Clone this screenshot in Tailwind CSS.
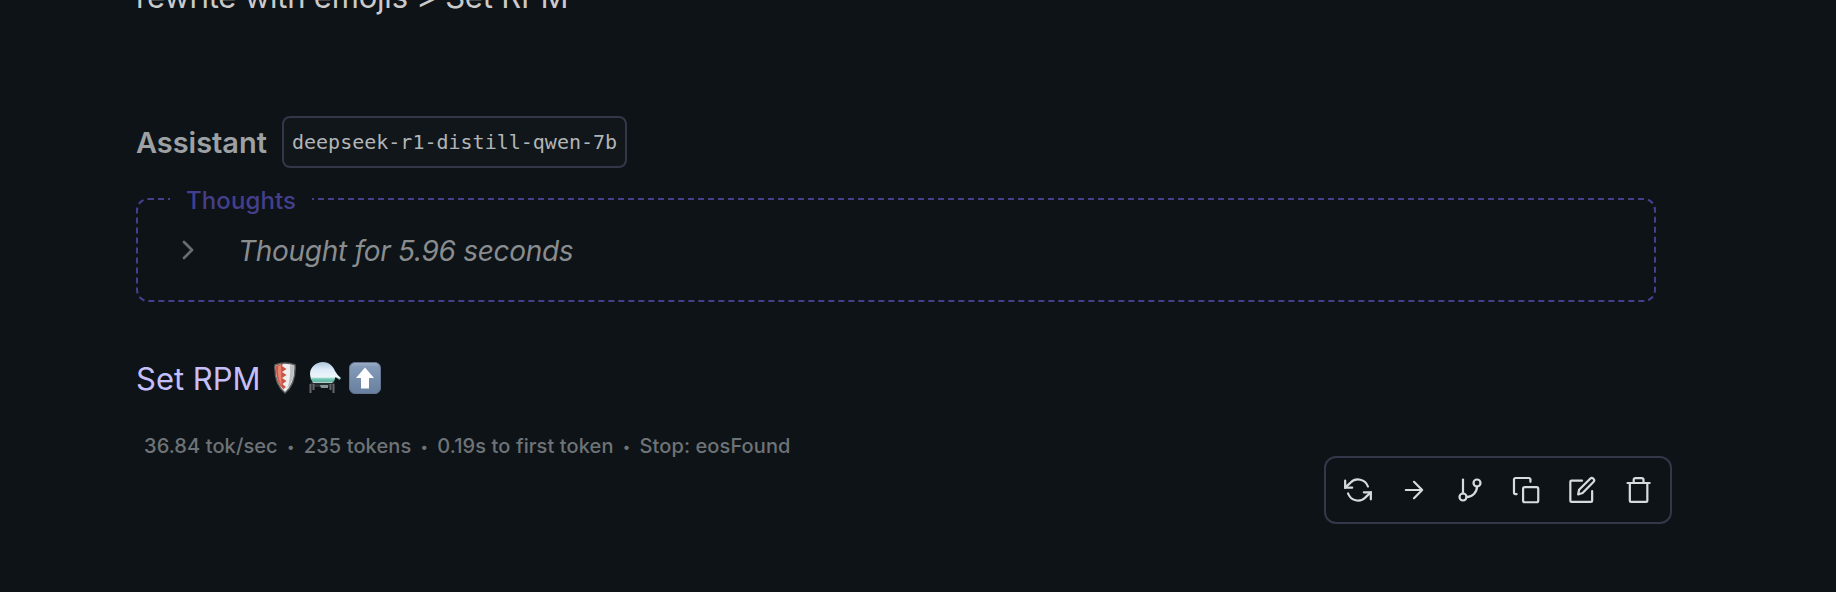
<!DOCTYPE html>
<html lang="en">
<head>
<meta charset="utf-8">
<title>Chat</title>
<script src="https://cdn.jsdelivr.net/npm/@tailwindcss/browser@4"></script>
</head>
<body class="h-[592px] w-[1836px] overflow-hidden bg-[#0e1317] font-['Inter',sans-serif] whitespace-nowrap">
<main class="relative flex h-full flex-col items-start pl-[136px]">
  <p class="-mt-[23px] h-[40px] text-[31px] leading-[40px] tracking-[-0.2px] text-[#cacaca]"><span>rewrite with emojis &gt; Set RPM</span></p>
  <header class="mt-[99px] flex h-[52px] items-center">
    <h2 class="w-[146px] pt-px text-[29px] font-semibold tracking-[-0.05px] text-[#9da1a3]"><span>Assistant</span></h2>
    <div class="flex h-[52px] w-[345px] items-center rounded-lg border-2 border-[#343649] bg-[#11161a] pl-[8px] font-['DejaVu_Sans_Mono',monospace] text-[20px] text-[#b2b5b7]"><span>deepseek-r1-distill-qwen-7b</span></div>
  </header>
  <fieldset class="mt-[18px] h-[116px] w-[1520px] rounded-[12px] border-2 border-dashed border-[#443f8d] pl-[32px]">
    <legend class="h-[26px] w-[142px] pl-[16px] text-[24px] leading-[30px] font-medium tracking-[0.1px] text-[#443f8d]"><span>Thoughts</span></legend>
    <div class="mt-[22px] flex h-[32px] items-center">
      <svg class="ml-[2px] size-8 text-[#686d70]" viewBox="0 0 24 24" fill="none" stroke="currentColor" stroke-width="2" stroke-linecap="round" stroke-linejoin="round"><path d="m9 18 6-6-6-6"/></svg>
      <span class="ml-[34px] pt-px text-[28px] tracking-[-0.3px] text-[#898d8f] italic">Thought for 5.96 seconds</span>
    </div>
  </fieldset>
  <div class="mt-[56px] flex h-[40px] items-center">
    <span class="w-[138px] pt-[2px] text-[31px] text-[#c4bffa]">Set RPM</span>
    <svg class="h-8 w-[22px]" viewBox="0 0 22 32">
      <path d="M1 3Q11-1 21 3Q22 22 11 31Q0 22 1 3Z" fill="#eeeeef" stroke="#5d5f61" stroke-width="1.5"/>
      <path d="M2 4Q5 2 9 1.700L8 4 12.500 7 8 10 12.500 13 8 16 12.500 19 8.500 22 12 25 9.500 27 11 29Q1 21 2 4Z" fill="#c85444"/>
      <path d="M4 4 7 3 7.500 24Q3 16 4 4Z" fill="#e88270"/>
      <path d="M16 3 20 4Q20 20 13 27Q17 17 16 3Z" fill="#bbbdbf"/>
    </svg>
    <svg class="ml-[13px] h-8 w-8" viewBox="0 0 32 32">
      <defs><linearGradient id="gl" x2="0" y2="1"><stop stop-color="#a9c5db"/><stop offset=".35" stop-color="#dcebf8"/><stop offset=".72" stop-color="#edf5fa"/><stop offset=".8" stop-color="#78cbb8"/><stop offset=".92" stop-color="#62b6a3"/><stop offset="1" stop-color="#c4dcda"/></linearGradient></defs>
      <path d="M1 20H26L25 23H2Z" fill="#292c2f"/>
      <path d="M1.500 22V31M4.500 22V28M24.500 22V31M21.500 22V28" stroke="#66696c" stroke-width="2"/>
      <path d="M5 24H22" stroke="#55595c"/>
      <path d="M11 23H19V26H12Z" fill="#84989c"/>
      <path d="M14 0C20 0 24 4 26 9Q28 13 32 16L30.500 18 26.500 15Q26 19 23 21H4Q1 17 1 12C1 5 7 0 14 0Z" fill="url(#gl)"/>
    </svg>
    <svg class="ml-2 h-8 w-8" viewBox="0 0 32 32">
      <defs><linearGradient id="up" x2="0" y2="1"><stop stop-color="#9eb0c8"/><stop offset=".15" stop-color="#8299b7"/><stop offset="1" stop-color="#687f9f"/></linearGradient></defs>
      <rect x=".5" y=".5" width="31" height="31" rx="5.500" fill="url(#up)" stroke="#64768f"/>
      <path d="M16 5.500 25 16H20V26.500H12V16H7Z" fill="#fff"/>
    </svg>
  </div>
  <p class="mt-[33px] ml-[8px] flex text-[20px] leading-[30px] font-medium tracking-[0.1px] text-[#6e7377]"><span>36.84 tok/sec</span><span class="w-[26px] pt-px text-center text-[14px]">•</span><span>235 tokens</span><span class="w-[26px] pt-px text-center text-[14px]">•</span><span>0.19s to first token</span><span class="w-[26px] pt-px text-center text-[14px]">•</span><span>Stop: eosFound</span></p>
  <nav class="absolute top-[456px] left-[1324px] flex h-[68px] w-[348px] items-center gap-[28px] rounded-[12px] border-2 border-[#343649] pl-[18px] text-[#d6dbdd]">
    <svg class="size-7" viewBox="0 0 24 24" fill="none" stroke="currentColor" stroke-width="1.9" stroke-linecap="round" stroke-linejoin="miter"><path d="M1 4v6h6M23 20v-6h-6"/><path d="M20.490 9A9 9 0 0 0 5.640 5.640L1 10m22 4-4.640 4.360A9 9 0 0 1 3.510 15"/></svg>
    <svg class="size-7" viewBox="0 0 24 24" fill="none" stroke="currentColor" stroke-width="1.9" stroke-linecap="round" stroke-linejoin="round"><path d="M5 12h14M12 5l7 7-7 7"/></svg>
    <svg class="size-7" viewBox="0 0 24 24" fill="none" stroke="currentColor" stroke-width="1.9" stroke-linecap="round" stroke-linejoin="round"><path d="M6 3v12"/><circle cx="18" cy="6" r="3"/><circle cx="6" cy="18" r="3"/><path d="M18 9a9 9 0 0 1-9 9"/></svg>
    <svg class="size-7" viewBox="0 0 24 24" fill="none" stroke="currentColor" stroke-width="1.9" stroke-linecap="round" stroke-linejoin="round"><rect x="9.500" y="9.500" width="13" height="13" rx="1.500"/><path d="M4 15.500H3a1.300 1.300 0 0 1-1.300-1.300V3a1.300 1.300 0 0 1 1.300-1.300h11.500A1.300 1.300 0 0 1 15.800 3v2"/></svg>
    <svg class="size-7" viewBox="0 0 24 24" fill="none" stroke="currentColor" stroke-width="1.9" stroke-linecap="round" stroke-linejoin="round"><path d="M12 4H3a1 1 0 0 0-1 1v16a1.200 1.200 0 0 0 1.200 1.200H19.500a1.200 1.200 0 0 0 1.200-1.200v-8"/><path d="M19 2.300a1.900 1.900 0 0 1 2.800 2.800L12.500 14.600l-3.800 1.200.8-4z"/></svg>
    <svg class="size-7" viewBox="0 0 24 24" fill="none" stroke="currentColor" stroke-width="1.9" stroke-linecap="round" stroke-linejoin="round"><path d="M3 6h19M20 6v15a1.200 1.200 0 0 1-1.200 1.200H6.200A1.200 1.200 0 0 1 5 21V6m3.300 0V3.200A1.500 1.500 0 0 1 9.800 1.800h5.400a1.500 1.500 0 0 1 1.500 1.500V6"/></svg>
  </nav>
</main>
</body>
</html>
